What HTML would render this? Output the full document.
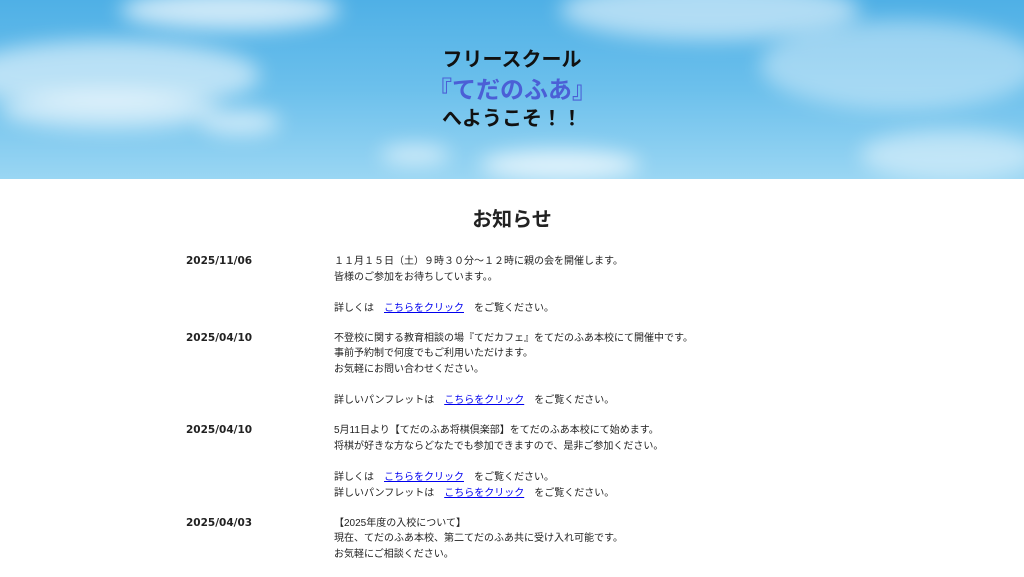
<!DOCTYPE html>
<html><head><meta charset="utf-8"><style>
html,body{margin:0;padding:0;background:#fff;width:1024px;height:568px;overflow:hidden;font-family:"Liberation Sans","Noto Sans CJK JP",sans-serif;color:#222}
.hero{position:relative;height:179px;overflow:hidden;background:linear-gradient(180deg,#4fb0e6 0%,#6cc0ec 50%,#9ad6f3 100%)}
.cl{position:absolute;border-radius:50%;background:rgba(255,255,255,.55);filter:blur(10px)}
.t{position:absolute;left:0;right:0;text-align:center;font-weight:bold}
h2{margin:0;position:absolute;top:203px;left:0;right:0;text-align:center;font-size:20px;font-weight:bold;color:#222}
.list{position:absolute;top:254px;left:186px;font-size:10px;line-height:15.6px}
.row{display:flex;margin-bottom:14.5px}
.d{width:148px;font-weight:bold;font-family:"DejaVu Sans",sans-serif;font-size:10.5px}
a{color:#00e;text-decoration:underline}
</style></head><body>
<div class="hero">
<div class="cl" style="left:-40px;top:40px;width:300px;height:70px"></div>
<div class="cl" style="left:120px;top:-10px;width:220px;height:40px;background:rgba(255,255,255,.7)"></div>
<div class="cl" style="left:0;top:90px;width:220px;height:40px"></div>
<div class="cl" style="left:560px;top:-20px;width:300px;height:60px"></div>
<div class="cl" style="left:760px;top:20px;width:280px;height:90px;background:rgba(255,255,255,.4)"></div>
<div class="cl" style="left:480px;top:150px;width:160px;height:30px;background:rgba(255,255,255,.7)"></div>
<div class="cl" style="left:380px;top:145px;width:70px;height:20px;background:rgba(255,255,255,.6)"></div>
<div class="cl" style="left:860px;top:130px;width:180px;height:50px;background:rgba(255,255,255,.45)"></div>
<div class="cl" style="left:200px;top:110px;width:80px;height:25px;background:rgba(255,255,255,.6)"></div>
<div class="t" style="top:43px;font-size:20px;color:#111">フリースクール</div>
<div class="t" style="top:70px;font-size:24px;color:#4b5fd6">『てだのふあ』</div>
<div class="t" style="top:102px;font-size:20px;color:#111">へようこそ！！</div>
</div>
<h2>お知らせ</h2>
<div class="list">
<div class="row"><div class="d">2025/11/06</div><div>１１月１５日（土）９時３０分～１２時に親の会を開催します。<br>皆様のご参加をお待ちしています。。<br><br>詳しくは　<a>こちらをクリック</a>　をご覧ください。</div></div>
<div class="row"><div class="d">2025/04/10</div><div>不登校に関する教育相談の場『てだカフェ』をてだのふあ本校にて開催中です。<br>事前予約制で何度でもご利用いただけます。<br>お気軽にお問い合わせください。<br><br>詳しいパンフレットは　<a>こちらをクリック</a>　をご覧ください。</div></div>
<div class="row"><div class="d">2025/04/10</div><div>5月11日より【てだのふあ将棋倶楽部】をてだのふあ本校にて始めます。<br>将棋が好きな方ならどなたでも参加できますので、是非ご参加ください。<br><br>詳しくは　<a>こちらをクリック</a>　をご覧ください。<br>詳しいパンフレットは　<a>こちらをクリック</a>　をご覧ください。</div></div>
<div class="row"><div class="d">2025/04/03</div><div>【2025年度の入校について】<br>現在、てだのふあ本校、第二てだのふあ共に受け入れ可能です。<br>お気軽にご相談ください。</div></div>
</div>
</body></html>
